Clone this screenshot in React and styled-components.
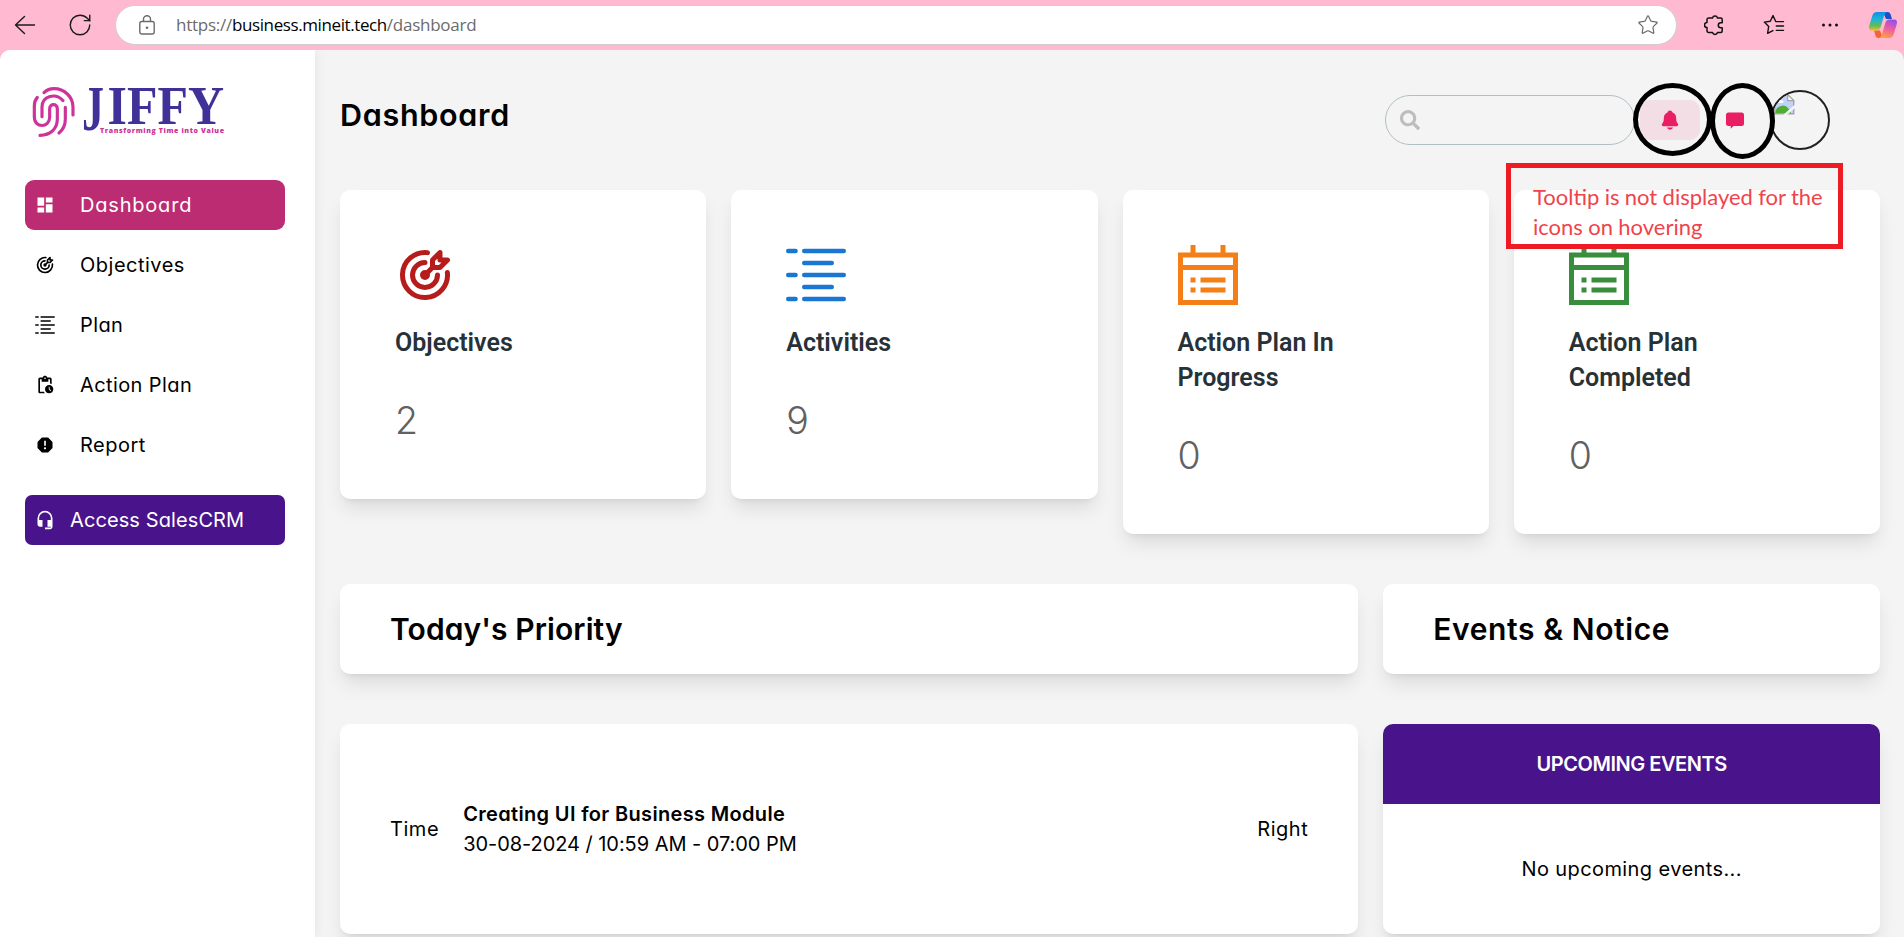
import React from 'react';
import styled, { createGlobalStyle, css } from 'styled-components';
import { MdDashboard, MdPendingActions, MdReport, MdHeadsetMic } from 'react-icons/md';
import { TbTargetArrow } from 'react-icons/tb';
import { GrPlan } from 'react-icons/gr';
import { FaSearch } from 'react-icons/fa';
import { IoNotifications } from 'react-icons/io5';
import { RotateCw, Star } from 'lucide-react';

const Global = createGlobalStyle`
  * { box-sizing: border-box; }
  body {
    margin: 0;
    background: #ffb9d0;
    color: #000;
    font: 400 20px/30px Inter, "Noto Sans", sans-serif;
    font-feature-settings: "cv11";
    overflow: hidden;
  }
  svg { display: block; flex: none; }
`;

const Screen = styled.div`
  position: relative;
  width: 1904px;
  height: 937px;
  overflow: hidden;
  display: flex;
  flex-direction: column;
`;

/* Browser bar */
const BrowserBar = styled.header`
  flex: none;
  height: 50px;
  padding: 0 6px 1px 14px;
  display: flex;
  align-items: center;
`;
const AddressBar = styled.div`
  flex: none;
  width: 1562px;
  height: 40px;
  margin: 0 27px 0 22px;
  padding: 0 17px 0 23px;
  display: flex;
  align-items: center;
  background: #fff;
  border: 1px solid #cfcdd0;
  border-radius: 20px;
`;
const Url = styled.div`
  flex: 1;
  margin-left: 21px;
  font: 400 17px/24px "Open Sans", sans-serif;
  letter-spacing: -0.25px;
  color: #6b6b6b;
  white-space: nowrap;
`;
const Host = styled.span`
  color: #000;
  letter-spacing: -0.4px;
`;
const BarDivider = styled.div`
  width: 2px;
  height: 20px;
  margin: 0 19px 0 20px;
  background: #c7929f;
`;
const BarSlot = styled.div`
  margin-left: ${(p) => p.$gap}px;
`;

/* Page shell */
const Page = styled.div`
  flex: 1;
  min-height: 0;
  display: flex;
  background: #f4f4f4;
  border-radius: 10px 10px 0 0;
  overflow: hidden;
`;
const Sidebar = styled.aside`
  flex: none;
  width: 315px;
  padding: 35px 30px 0 25px;
  background: #fff;
  box-shadow: 0 0 12px rgba(0, 0, 0, 0.08);
`;
const Logo = styled.svg`
  margin-bottom: 37px;
`;
const Nav = styled.nav`
  display: flex;
  flex-direction: column;
  gap: 10px;
`;
const NavItem = styled.a`
  display: flex;
  align-items: center;
  gap: 25px;
  height: 50px;
  padding: 0 10px;
  border-radius: 9px;
  letter-spacing: ${(p) => p.$tracking}px;
  ${(p) => p.$active && css`
    background: #bc2c72;
    color: #fff;
  `}
`;
const CrmLink = styled(NavItem)`
  gap: 15px;
  margin-top: 15px;
  border-radius: 7px;
  background: #49148b;
  color: #fff;
`;

const Main = styled.main`
  flex: 1;
  padding: 40px 24px 0 25px;
`;
const TopBar = styled.div`
  display: flex;
  align-items: center;
  height: 60px;
  margin-bottom: 40px;
  padding-right: 50px;
`;
const PageTitle = styled.h1`
  flex: 1;
  align-self: flex-start;
  margin: 0;
  font-size: 30.5px;
  line-height: 49px;
  font-weight: 600;
  letter-spacing: 0.7px;
`;
const SearchBox = styled.div`
  width: 250px;
  height: 50px;
  margin-right: 5px;
  padding-left: 14px;
  display: flex;
  align-items: center;
  border: 1px solid #b0bec5;
  border-radius: 25px;
  color: #bdbdbd;
`;
const IconButton = styled.button`
  width: 60px;
  height: 40px;
  margin-right: 5px;
  padding: 0;
  display: flex;
  align-items: center;
  justify-content: center;
  border: 0;
  border-radius: 10px;
  color: #e91e63;
  background: ${(p) => (p.$hovered ? 'rgba(233, 30, 99, 0.1)' : 'transparent')};
`;
const Avatar = styled.div`
  width: 60px;
  height: 60px;
  padding: 2px 2px;
  border: 2px solid #212121;
  border-radius: 50%;
  overflow: hidden;
`;

/* Cards */
const Card = styled.section`
  background: #fff;
  border-radius: 10px;
  box-shadow: 0 12.5px 18.75px -3.75px rgba(0, 0, 0, 0.1), 0 5px 7.5px -5px rgba(0, 0, 0, 0.1);
`;
const StatGrid = styled.div`
  display: grid;
  grid-template-columns: repeat(4, 1fr);
  align-items: start;
  gap: 25px;
  height: 344px;
  margin-bottom: 50px;
`;
const StatCard = styled(Card)`
  padding: 55px;
`;
const StatIcon = styled.div`
  height: 60px;
  margin-bottom: 20px;
  color: ${(p) => p.$color};
`;
const StatTitle = styled.h2`
  margin: 0 0 37px;
  max-width: 200px;
  font: 600 25px/35px Roboto, sans-serif;
  color: #263238;
`;
const StatValue = styled.div`
  font-size: 37.5px;
  line-height: 47px;
  font-weight: 350;
  color: #616161;
`;
const Panels = styled.div`
  display: grid;
  grid-template-columns: repeat(3, 1fr);
  grid-template-rows: 90px 210px;
  gap: 50px 25px;
`;
const HeadingCard = styled(Card)`
  display: flex;
  align-items: center;
  padding: 0 50px;
  grid-column: span ${(p) => p.$span};
`;
const Heading = styled.h2`
  margin: 0;
  font-size: 30px;
  line-height: 40px;
  font-weight: 600;
  letter-spacing: ${(p) => p.$tracking}px;
`;
const TaskCard = styled(Card)`
  grid-column: span 2;
  display: flex;
  align-items: center;
  gap: 24px;
  padding: 0 50px;
`;
const Label = styled.span`
  letter-spacing: 0.55px;
`;
const TaskBody = styled.div`
  flex: 1;
  letter-spacing: -0.05px;
`;
const TaskTitle = styled.div`
  font-weight: 600;
  letter-spacing: 0.34px;
`;
const EventsCard = styled(Card)`
  display: flex;
  flex-direction: column;
  overflow: hidden;
`;
const EventsHead = styled.div`
  display: flex;
  align-items: center;
  justify-content: center;
  height: 80px;
  background: #49148b;
  color: #fff;
  font-weight: 600;
  letter-spacing: -0.45px;
`;
const EventsBody = styled.div`
  flex: 1;
  display: flex;
  align-items: center;
  justify-content: center;
  letter-spacing: 0.4px;
`;

/* Review marks lying over the page */
const Ring = styled.div`
  position: absolute;
  left: ${(p) => p.$x}px;
  top: 83px;
  width: ${(p) => p.$w}px;
  height: ${(p) => p.$h}px;
  border: 5px solid #000;
  border-radius: 50%;
`;
const Note = styled.div`
  position: absolute;
  left: 1506px;
  top: 163px;
  width: 337px;
  height: 86px;
  padding: 14px 0 0 22px;
  border: 5px solid #ed1c24;
  color: #f0434b;
  font: 400 22px/29.5px Lato, sans-serif;
  word-spacing: -0.3px;
  white-space: nowrap;
`;

const BackIcon = () => (
  <svg width="22" height="22" viewBox="0 0 22 22" fill="none" stroke="#1b1b1b" strokeWidth="1.4" strokeLinecap="round" strokeLinejoin="round">
    <path d="M20.5 11H1.5M10.5 2.5 1.5 11l9 8.500" />
  </svg>
);
const LockIcon = () => (
  <svg width="16" height="20" viewBox="0 0 16 20" fill="none" stroke="#6b6b6b" strokeWidth="1.4">
    <rect x="0.800" y="6.500" width="14.400" height="12.500" rx="2" />
    <path d="M4.500 6.500V4.300a3.500 3.500 0 0 1 7 0v2.200" />
    <circle cx="8" cy="12.700" r="1.300" fill="#6b6b6b" stroke="none" />
  </svg>
);
const PuzzleIcon = () => (
  <svg width="20" height="22" viewBox="0 0 20 22" fill="none" stroke="#111" strokeWidth="1.500" strokeLinejoin="round">
    <path d="M4.500 4h4a2.600 2.600 0 0 1 5 0h3.200a1.500 1.500 0 0 1 1.500 1.500v3.200h-1.400a2.500 2.500 0 0 0 0 5h1.400V17a1.500 1.500 0 0 1-1.500 1.500h-3.200a2.600 2.600 0 0 1-5 0h-4A1.500 1.500 0 0 1 3 17v-3.400a2.500 2.500 0 0 1 0-5V5.500A1.500 1.500 0 0 1 4.500 4z" />
  </svg>
);
const FavoritesIcon = () => (
  <svg width="22" height="22" viewBox="0 0 22 22" fill="none" stroke="#111" strokeWidth="1.400" strokeLinejoin="round" strokeLinecap="round">
    <path d="M13.500 7.600 12.600 7.300 10 1.600 7.300 7.300 1.300 8.100l4.400 4.300-1.100 6.900 5.300-2.700M12.700 7.600h7.800M13.300 12h7.200M13.300 16.400h7.200" />
  </svg>
);
const MoreIcon = () => (
  <svg width="18" height="6" viewBox="0 0 18 6" fill="#111">
    <circle cx="2.500" cy="3" r="1.500" /><circle cx="9" cy="3" r="1.500" /><circle cx="15.500" cy="3" r="1.500" />
  </svg>
);
const CopilotIcon = () => (
  <svg width="30" height="28" viewBox="0 0 30 28">
    <defs>
      <linearGradient id="cpA" x1="0" y1="0" x2="0" y2="1">
        <stop offset="0" stopColor="#0c8fe8" /><stop offset="0.4" stopColor="#1fb5d8" /><stop offset="0.75" stopColor="#64bb55" /><stop offset="1" stopColor="#f0c419" />
      </linearGradient>
      <linearGradient id="cpB" x1="0.600" y1="0" x2="0.300" y2="1">
        <stop offset="0" stopColor="#9a4fe8" /><stop offset="0.500" stopColor="#f0609c" /><stop offset="1" stopColor="#ffa23e" />
      </linearGradient>
    </defs>
    <path d="M15 1h4.500q2.500 0 3.300 3L24 8h-6z" fill="#1c4fc8" />
    <path d="M15 27h-4.500q-2.500 0-3.200-3L6 19.500h6z" fill="#f2643c" />
    <path d="M9 1h10q-2 .4-3 4l-3.500 11.500Q11.500 19.500 8 19.500H4Q0 19.500 1.300 14.500L4.600 4Q5.600 1 9 1z" fill="url(#cpA)" />
    <path d="M21 27H11q2-.4 3-4l3.500-11.500Q18.500 8.500 22 8.500h4q4 0 2.700 5L25.400 24q-1 3-4.400 3z" fill="url(#cpB)" />
  </svg>
);
const PlanListIcon = ({ size, thick }) => (
  <svg width={size} height={size} viewBox="0 0 60 60" fill="none" stroke="currentColor" strokeWidth={thick} strokeLinecap="round">
    <path d="M2.200 6h7.400M18.200 6h39.600M18.200 18h27.600M2.200 30h7.400M18.200 30h39.600M18.200 42h27.600M2.200 54h7.400M18.200 54h39.600" />
  </svg>
);
const ChatIcon = () => (
  <svg width="18" height="17" viewBox="0 0 18 17" fill="currentColor">
    <path d="M2.500 0.500h13A2.500 2.500 0 0 1 18 3v8.500a2.500 2.500 0 0 1-2.500 2.500H7.500L4.700 16.800V14H2.500A2.500 2.500 0 0 1 0 11.500V3A2.500 2.500 0 0 1 2.500 0.500z" />
  </svg>
);
const BrokenImageIcon = () => (
  <svg width="21" height="21" viewBox="0 0 21 21">
    <path d="M0.700 0.700h13l6 6v13h-19z" fill="#bfd2f8" stroke="#a3a3a3" strokeWidth="1.400" />
    <path d="M13.700 0.700v6h6z" fill="#fff" stroke="#a3a3a3" strokeWidth="1.200" />
    <ellipse cx="6.500" cy="7.500" rx="3" ry="1.600" fill="#fff" />
    <path d="M1.400 19q0-6.500 7.600-7.500 5 0 8 7.500z" fill="#4fad32" />
    <path d="M9 21 21 10.500v3.500L13 21z" fill="#f4f4f4" />
  </svg>
);
const JiffyLogo = () => (
  <Logo width="205" height="58" viewBox="25 85 205 58" overflow="visible">
    <g transform="translate(26 80) scale(0.33333)" fill="none" stroke="#cd3399" strokeWidth="9.500" strokeLinecap="round">
      <path d="M54 38Q66 26 84 26C115 26 141 50 141 82V105" />
      <path d="M34 52Q25 62 25 78V110C25 146 71 144 71 112V86C71 70 94 70 94 86V118C94 148 72 165 42 166" />
      <path d="M48 110V82C48 46 90 38 111 62" />
      <path d="M118 82V118Q118 144 99 159" />
    </g>
    <text fontFamily="Liberation Serif, serif" fontWeight="700" fill="#3f3198">
      <tspan x="82" y="130" fontSize="64" textLength="22" lengthAdjust="spacingAndGlyphs">J</tspan>
      <tspan x="107.500" y="124" fontSize="55.500" textLength="116.500" lengthAdjust="spacingAndGlyphs">IFFY</tspan>
    </text>
    <text x="100" y="133" fontFamily="Open Sans, sans-serif" fontWeight="800" fontSize="7" fill="#cd3399" textLength="124">Transforming Time into Value</text>
  </Logo>
);

const navItems = [
  { label: 'Dashboard', icon: <MdDashboard />, tracking: 0.8, active: true },
  { label: 'Objectives', icon: <TbTargetArrow />, tracking: 0.5 },
  { label: 'Plan', icon: <PlanListIcon size={20} thick={4} />, tracking: 0.4 },
  { label: 'Action Plan', icon: <MdPendingActions />, tracking: 0.4 },
  { label: 'Report', icon: <MdReport />, tracking: 0.5 },
];
const stats = [
  { title: 'Objectives', value: 2, color: '#b71c1c', icon: <TbTargetArrow size={60} /> },
  { title: 'Activities', value: 9, color: '#1976d2', icon: <PlanListIcon size={60} thick={4.4} /> },
  { title: 'Action Plan In Progress', value: 0, color: '#f57f17', icon: <GrPlan size={60} /> },
  { title: 'Action Plan Completed', value: 0, color: '#388e3c', icon: <GrPlan size={60} /> },
];

export default function App() {
  return (
    <Screen>
      <Global />
      <BrowserBar>
        <BackIcon />
        <BarSlot $gap={31}><RotateCw size={26} strokeWidth={1.3} color="#1b1b1b" /></BarSlot>
        <AddressBar>
          <LockIcon />
          <Url>https://<Host>business.mineit.tech</Host>/dashboard</Url>
          <Star size={22} strokeWidth={1.3} color="#6b6b6b" />
        </AddressBar>
        <PuzzleIcon />
        <BarDivider />
        <FavoritesIcon />
        <BarSlot $gap={36}><MoreIcon /></BarSlot>
        <BarSlot $gap={29}><CopilotIcon /></BarSlot>
      </BrowserBar>
      <Page>
        <Sidebar>
          <JiffyLogo />
          <Nav>
            {navItems.map((n) => (
              <NavItem key={n.label} $active={n.active} $tracking={n.tracking}>{n.icon}{n.label}</NavItem>
            ))}
            <CrmLink $tracking={0.1}><MdHeadsetMic />Access SalesCRM</CrmLink>
          </Nav>
        </Sidebar>
        <Main>
          <TopBar>
            <PageTitle>Dashboard</PageTitle>
            <SearchBox><FaSearch size={20} /></SearchBox>
            <IconButton $hovered><IoNotifications size={22} /></IconButton>
            <IconButton><ChatIcon /></IconButton>
            <Avatar><BrokenImageIcon /></Avatar>
          </TopBar>
          <StatGrid>
            {stats.map((s) => (
              <StatCard key={s.title}>
                <StatIcon $color={s.color}>{s.icon}</StatIcon>
                <StatTitle>{s.title}</StatTitle>
                <StatValue>{s.value}</StatValue>
              </StatCard>
            ))}
          </StatGrid>
          <Panels>
            <HeadingCard $span={2}><Heading $tracking={0.1}>Today's Priority</Heading></HeadingCard>
            <HeadingCard $span={1}><Heading $tracking={0.6}>Events &amp; Notice</Heading></HeadingCard>
            <TaskCard>
              <Label>Time</Label>
              <TaskBody>
                <TaskTitle>Creating UI for Business Module</TaskTitle>
                <div>30-08-2024 / 10:59 AM - 07:00 PM</div>
              </TaskBody>
              <Label>Right</Label>
            </TaskCard>
            <EventsCard>
              <EventsHead>UPCOMING EVENTS</EventsHead>
              <EventsBody>No upcoming events...</EventsBody>
            </EventsCard>
          </Panels>
        </Main>
      </Page>
      <Ring $x={1633} $w={79} $h={73} />
      <Ring $x={1710} $w={65} $h={76} />
      <Note>Tooltip is not displayed for the<br />icons on hovering</Note>
    </Screen>
  );
}
